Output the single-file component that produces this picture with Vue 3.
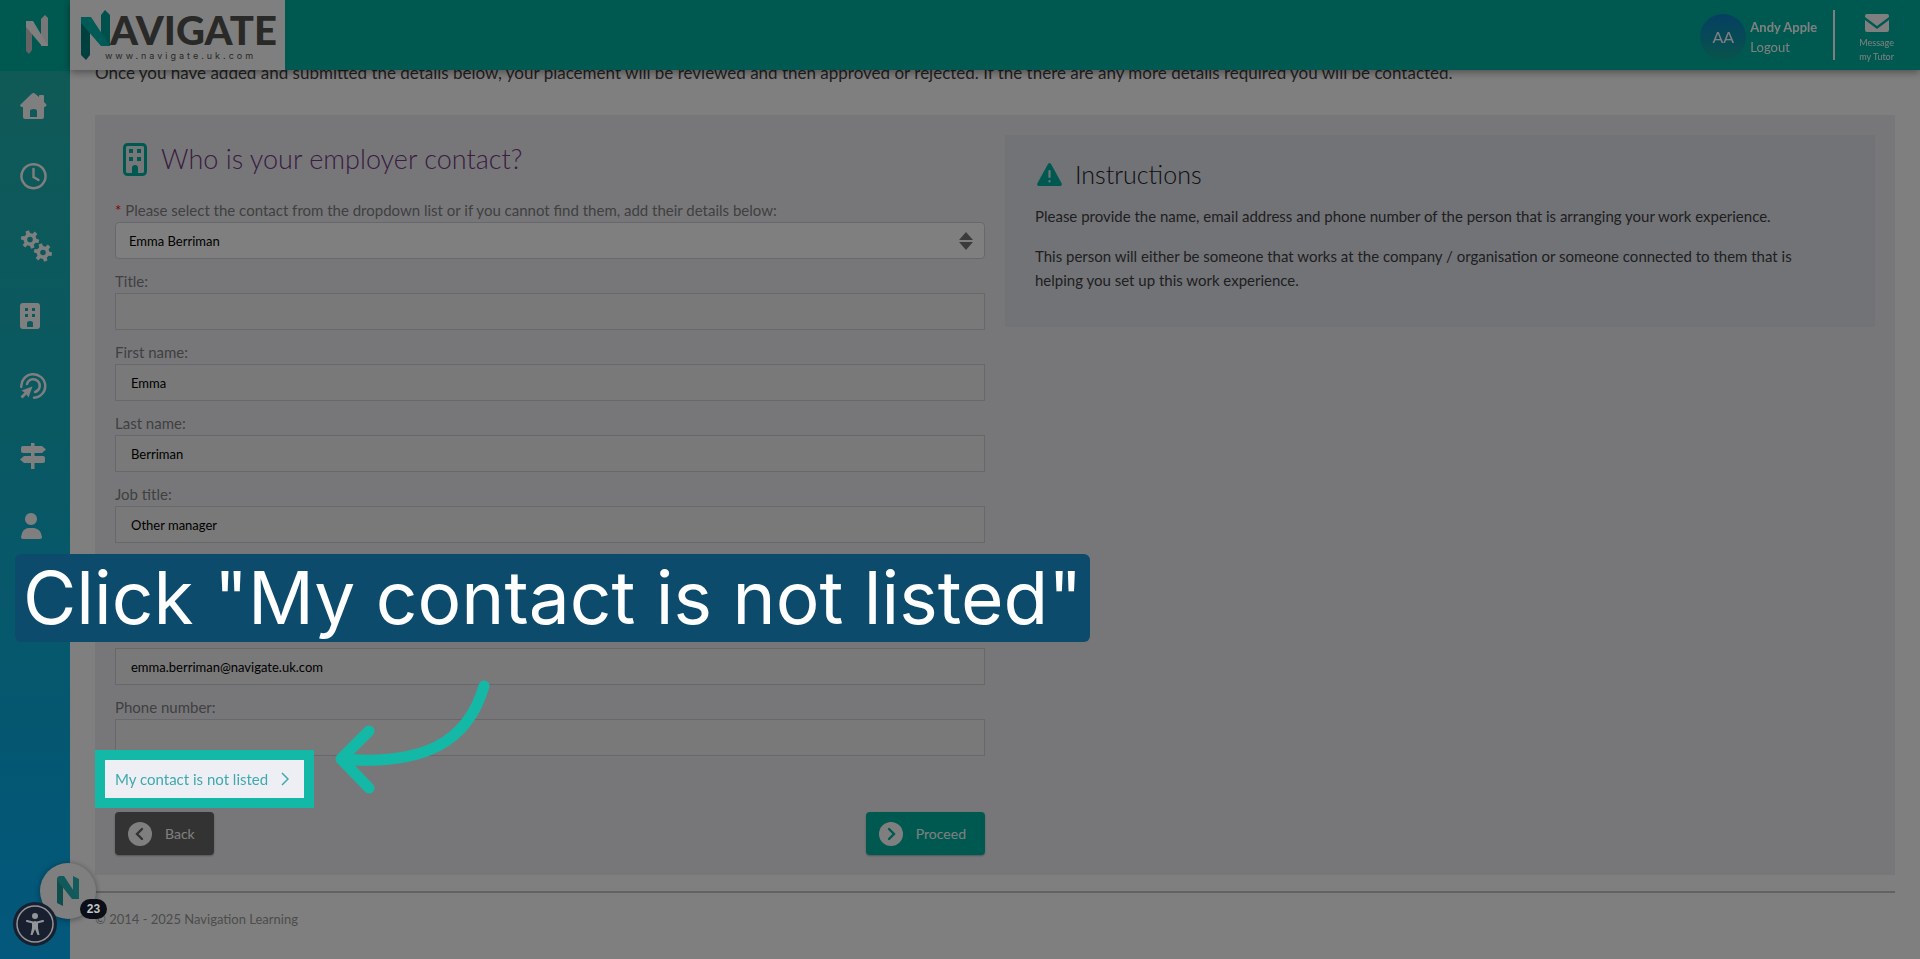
<template>
    <div class="layout">
        <header class="topbar">
            <a href="#" class="brand" aria-label="Navigate">
                <svg width="215" height="70" viewBox="70 0 215 70">
                    <path d="M81 17h9v38l-4 5-5-5z" fill="#00817f" />
                    <path d="M101 15l4-5 5 5v31h-9z" fill="#00a39c" />
                    <path d="M81 17h10l19 29h-9L81 23z" fill="#00b5ac" />
                    <text x="110" y="45" class="brand-name">AVIGATE</text>
                    <text x="105" y="59" class="brand-url">www.navigate.uk.com</text>
                </svg>
            </a>
            <div class="user">
                <span class="avatar">AA</span>
                <div class="user-text">
                    <strong>Andy Apple</strong>
                    <a href="#">Logout</a>
                </div>
                <a href="#" class="message">
                    <svg width="24" height="18" viewBox="0 0 24 18">
                        <path d="M2 0h20a2 2 0 0 1 2 2v1L12 12 0 3V2a2 2 0 0 1 2-2z" fill="#fff" />
                        <path d="M0 6l12 9 12-9v10a2 2 0 0 1-2 2H2a2 2 0 0 1-2-2z" fill="#fff" />
                    </svg>
                    <span>Message<br>my Tutor</span>
                </a>
            </div>
        </header>

        <nav class="sidebar" aria-label="Main">
            <a href="#" class="sidebar-logo" aria-label="Navigate home">
                <svg width="24" height="40" viewBox="0 0 24 40">
                    <path d="M1 6h6v29l-3 4-3-3z" fill="#c8c8c8" />
                    <path d="M16 4l4-4 3 3v28h-7z" fill="#eee" />
                    <path d="M1 6h7l15 25h-6L1 12z" fill="#fff" />
                </svg>
            </a>
            <a v-for="item in menu" :key="item.label" href="#" class="sidebar-item" :aria-label="item.label">
                <svg :width="item.width" :height="item.height" :viewBox="'0 0 ' + item.width + ' ' + item.height">
                    <path
                        v-for="(shape, index) in item.shapes"
                        :key="index"
                        :d="shape"
                        :class="item.outline && index < item.outline ? 'line' : 'solid'"
                    />
                </svg>
            </a>
        </nav>

        <main class="content">
            <p class="intro">Once you have added and submitted the details below, your placement will be reviewed and then approved or rejected. If the there are any more details required you will be contacted.</p>

            <section class="panel">
                <form @submit.prevent>
                    <h2 class="form-title">
                        <svg width="24" height="33" viewBox="0 0 24 33">
                            <rect x="1.5" y="1.5" width="21" height="30" rx="3" fill="none" stroke="#00b3a1" stroke-width="3" />
                            <path d="M6 6h4v4H6zM14 6h4v4h-4zM6 14h4v4H6zM14 14h4v4h-4zM9 31v-6a3 3 0 0 1 6 0v6z" fill="#00b3a1" />
                        </svg>
                        Who is your employer contact?
                    </h2>

                    <div class="field">
                        <label for="contact"><span class="required">*</span> Please select the contact from the dropdown list or if you cannot find them, add their details below:</label>
                        <div class="select-wrap">
                            <select id="contact" v-model="contact">
                                <option>Emma Berriman</option>
                            </select>
                            <svg width="14" height="18" viewBox="0 0 14 18">
                                <path d="M7 0l7 8H0zM0 10h14l-7 8z" fill="#777" />
                            </svg>
                        </div>
                    </div>

                    <div v-for="field in fields" :key="field.id" class="field">
                        <label :for="field.id">{{ field.label }}</label>
                        <input :id="field.id" v-model="field.value" type="text">
                    </div>

                    <a href="#" class="not-listed">
                        My contact is not listed
                        <svg width="8" height="14" viewBox="0 0 8 14">
                            <path d="M1 1l6 6-6 6" fill="none" stroke="#3fa9ad" stroke-width="1.5" />
                        </svg>
                    </a>

                    <div class="actions">
                        <button type="button" class="btn btn-back">
                            <svg width="24" height="24" viewBox="0 0 24 24">
                                <circle cx="12" cy="12" r="12" fill="#fff" />
                                <path d="M14 7l-5 5 5 5" fill="none" stroke="#666" stroke-width="2.4" stroke-linecap="round" />
                            </svg>
                            Back
                        </button>
                        <button type="submit" class="btn btn-next">
                            <svg width="24" height="24" viewBox="0 0 24 24">
                                <circle cx="12" cy="12" r="12" fill="#fff" />
                                <path d="M10 7l5 5-5 5" fill="none" stroke="#00b3a1" stroke-width="2.4" stroke-linecap="round" />
                            </svg>
                            Proceed
                        </button>
                    </div>
                </form>

                <aside class="instructions">
                    <h3>
                        <svg width="25" height="23" viewBox="0 0 25 23">
                            <path d="M11 1q1.500-2 3 0l10.500 19q1 3-1.500 3H2q-2.500 0-1.500-3z" fill="#00b3a1" />
                            <path d="M12.500 8v6M12.500 18v.5" stroke="#e4e6ef" stroke-width="2.200" stroke-linecap="round" />
                        </svg>
                        Instructions
                    </h3>
                    <p>Please provide the name, email address and phone number of the person that is arranging your work experience.</p>
                    <p>This person will either be someone that works at the company / organisation or someone connected to them that is helping you set up this work experience.</p>
                </aside>
            </section>

            <footer class="footer">© 2014 - 2025 Navigation Learning</footer>
        </main>

        <button type="button" class="chat" aria-label="Chat">
            <svg width="24" height="30" viewBox="0 0 24 30">
                <path d="M1 2h6v28l-6-3z" fill="#1a9a9c" />
                <path d="M17 0l6 3v20h-6z" fill="#29b9b9" />
                <path d="M1 2l2-2h5l15 23h-7L1 4z" fill="#22b2b4" />
            </svg>
        </button>
        <span class="badge">23</span>
        <button type="button" class="access" aria-label="Accessibility">
            <svg width="44" height="44" viewBox="0 0 44 44">
                <circle cx="22" cy="22" r="22" fill="#182030" />
                <circle cx="22" cy="22" r="18" fill="none" stroke="#929599" stroke-width="1.500" />
                <circle cx="22" cy="14" r="3" fill="#929599" />
                <path d="M14 19l6 1.500h4l6-1.500M22 20v6" fill="none" stroke="#929599" stroke-width="2.200" stroke-linecap="round" />
                <path d="M19 20h6v6l1.500 7h-2L22 27l-2.500 6h-2l1.500-7z" fill="#929599" />
            </svg>
        </button>

        <!-- walkthrough step -->
        <div class="tour-caption">Click "My contact is not listed"</div>
        <svg class="tour-arrow" width="160" height="120" viewBox="332 678 160 120">
            <path d="M484 686C468 742 424 766 341 759M369 731l-28 28 28 29" fill="none" stroke="#14b8a6" stroke-width="11" stroke-linecap="round" stroke-linejoin="round" />
        </svg>
    </div>
</template>

<script setup>
import { ref } from 'vue';

const contact = ref('Emma Berriman');

const fields = ref([
    { id: 'title', label: 'Title:', value: '' },
    { id: 'first-name', label: 'First name:', value: 'Emma' },
    { id: 'last-name', label: 'Last name:', value: 'Berriman' },
    { id: 'job-title', label: 'Job title:', value: 'Other manager' },
    { id: 'department', label: 'Department:', value: '' },
    { id: 'email', label: 'Email address:', value: 'emma.berriman@navigate.uk.com' },
    { id: 'phone', label: 'Phone number:', value: '' }
]);

// six-tooth cog with a round hole, centred on cx, cy
function gear(cx, cy) {
    const points = [];
    for (let i = 0; i < 6; i++) {
        [[-18, 6.4], [-11, 9.2], [11, 9.2], [18, 6.4]].forEach(([offset, r]) => {
            const a = ((i * 60 + offset + 12) * Math.PI) / 180;
            points.push((cx + r * Math.cos(a)).toFixed(2) + ' ' + (cy + r * Math.sin(a)).toFixed(2));
        });
    }
    return 'M' + points.join('L') + 'z' + `M${cx - 2.8} ${cy}a2.8 2.8 0 1 0 5.6 0a2.8 2.8 0 1 0 -5.6 0z`;
}

const menu = [
    {
        label: 'Home',
        width: 27,
        height: 26,
        shapes: ['M12 .6q1.400-1.200 2.800 0L19 4V3q0-1 1-1h3q1 0 1 1v6l2 2q1 1 0 2l-1 1h-1v10q0 2-2 2H5q-2 0-2-2V14H1.500q-2-1-1-2.500zM10 24h7v-6q0-2-3.500-2T10 18z']
    },
    {
        label: 'Hours',
        width: 27,
        height: 27,
        outline: 2,
        shapes: ['M13.500 1.200a12 12 0 1 0 .01 0z', 'M13.500 6v8l5 3']
    },
    { label: 'Settings', width: 32, height: 32, shapes: [gear(10, 9.5), gear(23, 22.5)] },
    {
        label: 'Employers',
        width: 20,
        height: 26,
        shapes: ['M3 0h14q3 0 3 3v20q0 3-3 3H3q-3 0-3-3V3q0-3 3-3zM5 5v3h3V5zM12 5v3h3V5zM5 11v3h3v-3zM12 11v3h3v-3zM7 24h6v-4q0-2-3-2t-3 2z']
    },
    {
        label: 'Placements',
        width: 27,
        height: 26,
        outline: 2,
        shapes: ['M1.300 14A12 11.800 0 1 1 14 24.800', 'M7 11a6.500 6.500 0 1 1 8 8', 'M12.500 13.500l-4 11-2-3-4 4-2-2 4-4-3-2z']
    },
    {
        label: 'Pathways',
        width: 26,
        height: 26,
        shapes: ['M11 0h3.500v26H11z', 'M3 3h19l4 3.500-4 3.500H3q-2 0-2-2V5q0-2 2-2z', 'M4 13h19q2 0 2 2v3q0 2-2 2H4l-4-3.500z']
    },
    {
        label: 'Profile',
        width: 23,
        height: 26,
        shapes: ['M11 0a6 6 0 1 0 .01 0z', 'M8 15h6q7 1 8 9 0 2-2 2H3q-2 0-2-2 1-8 7-9z']
    }
];
</script>

<style>
body {
    margin: 0;
    background: #fff;
}
</style>

<style scoped>
.layout {
    min-height: 100vh;
    overflow: hidden;
    font-family: Lato, "Open Sans", sans-serif;
    font-size: 15px;
    line-height: 24px;
    color: #3f3f3f;
}

.layout * {
    box-sizing: border-box;
}

a {
    color: inherit;
    text-decoration: none;
}

.topbar {
    position: fixed;
    top: 0;
    left: 70px;
    right: 0;
    z-index: 10;
    height: 70px;
    display: flex;
    justify-content: space-between;
    background: #00b3a1;
    box-shadow: 0 2px 8px rgba(0, 0, 0, 0.4);
}

.brand {
    background: #fff;
}

.brand svg {
    display: block;
}

.brand-name {
    font-size: 40px;
    font-weight: 900;
    fill: #53534f;
}

.brand-url {
    font-family: Inter, sans-serif;
    font-size: 9px;
    letter-spacing: 3px;
    fill: #53534f;
}

.user {
    display: flex;
    align-items: center;
    padding-right: 26px;
    color: #fff;
}

.avatar {
    width: 46px;
    height: 46px;
    margin-top: 4px;
    border-radius: 50%;
    background: linear-gradient(#0b7fc4, #11a898);
    font-size: 16px;
    line-height: 46px;
    text-align: center;
}

.user-text {
    display: flex;
    flex-direction: column;
    margin: 4px 16px 0 4px;
    font-size: 13px;
    line-height: 20px;
}

.message {
    height: 50px;
    padding: 4px 0 0 24px;
    border-left: 2px solid #fff;
    font-size: 9px;
    line-height: 14px;
    text-align: center;
}

.message svg {
    display: block;
    margin: 0 auto 4px;
}

.message span {
    display: block;
}

.sidebar {
    position: fixed;
    top: 0;
    bottom: 0;
    left: 0;
    width: 70px;
    z-index: 5;
    background: linear-gradient(#22b3a8, #12b2c6 45%, #0aafe0 75%, #06b0fa);
}

.sidebar-logo {
    display: block;
    height: 71px;
    padding: 15px 0 0 25px;
    background: #00b3a1;
}

.sidebar-item {
    display: flex;
    align-items: center;
    height: 70px;
    padding-left: 20px;
}

.solid {
    fill: #fff;
    fill-rule: evenodd;
}

.line {
    fill: none;
    stroke: #fff;
    stroke-width: 2.4px;
    stroke-linecap: round;
}

.content {
    margin-left: 70px;
    padding: 61px 25px 0;
}

.intro {
    margin: 0 0 30px;
    font-size: 17px;
}

.panel {
    display: grid;
    grid-template-columns: 1fr 1fr;
    align-items: start;
    gap: 20px;
    padding: 20px;
    background: #eeeff4;
}

.form-title {
    display: flex;
    align-items: center;
    gap: 14px;
    margin: 0 0 15px;
    padding-left: 8px;
    font-size: 27px;
    font-weight: 300;
    line-height: 48px;
    color: #743a82;
}

.field {
    margin-bottom: 10px;
}

.field label {
    display: block;
    color: #808080;
}

.required {
    color: #f00;
}

.field input,
.field select {
    display: block;
    width: 100%;
    height: 37px;
    padding: 0 15px;
    border: 1px solid #ced0d6;
    background: #f2f2f2;
    font: 13px Lato, "Open Sans", sans-serif;
    color: #000;
}

.select-wrap {
    position: relative;
}

.field select {
    appearance: none;
    padding: 0 13px;
    border-radius: 4px;
    background: #fff;
}

.select-wrap svg {
    position: absolute;
    top: 10px;
    right: 12px;
    pointer-events: none;
}

/* highlighted step target, its shadow dims the rest of the page */
.not-listed {
    position: relative;
    z-index: 50;
    display: flex;
    align-items: center;
    gap: 13px;
    width: max-content;
    height: 58px;
    margin: -16px 0 4px -20px;
    padding: 0 15px 0 10px;
    border: 10px solid #14b8a6;
    background: #eeeff4;
    box-shadow: 0 0 0 4000px rgba(0, 0, 0, 0.5);
    color: #3fa9ad;
}

.actions {
    display: flex;
    justify-content: space-between;
}

.btn {
    display: flex;
    align-items: center;
    gap: 13px;
    height: 43px;
    padding: 0 19px 0 13px;
    border: 0;
    border-radius: 4px;
    box-shadow: 0 1px 2px rgba(0, 0, 0, 0.3);
    font: 14px Lato, "Open Sans", sans-serif;
    color: #fff;
}

.btn-back {
    background: #666;
}

.btn-next {
    background: #00b3a1;
}

.instructions {
    padding: 15px 60px 35px 30px;
    background: #e4e6ef;
}

.instructions h3 {
    display: flex;
    align-items: center;
    gap: 13px;
    margin: 0 0 6px;
    padding-left: 2px;
    font-size: 25px;
    font-weight: 300;
    line-height: 48px;
    color: #222;
}

.instructions p {
    margin: 0 0 16px;
}

.instructions p:last-child {
    margin: 0;
}

.footer {
    margin-top: 16px;
    padding: 14px 0 28px;
    border-top: 2px solid #c4c4c4;
    font-size: 13px;
    color: #999;
}

.chat {
    position: fixed;
    left: 40px;
    bottom: 40px;
    z-index: 20;
    display: grid;
    place-items: center;
    width: 56px;
    height: 56px;
    padding: 0;
    border: 0;
    border-radius: 50%;
    background: #fff;
    box-shadow: 0 1px 6px rgba(0, 0, 0, 0.4);
}

.badge {
    position: fixed;
    left: 80px;
    bottom: 40px;
    z-index: 60;
    width: 27px;
    height: 20px;
    border-radius: 10px;
    background: #0a0e18;
    font: bold 12px/20px "Liberation Sans", sans-serif;
    text-align: center;
    color: #c4c4c4;
}

.access {
    position: fixed;
    left: 13px;
    bottom: 13px;
    z-index: 60;
    padding: 0;
    border: 0;
    background: none;
}

.access svg {
    display: block;
}

.tour-caption {
    position: absolute;
    top: 554px;
    left: 15px;
    z-index: 60;
    height: 88px;
    padding: 0 8px;
    border-radius: 6px;
    background: #0d4b6d;
    font-family: Inter, sans-serif;
    font-size: 73px;
    line-height: 88px;
    white-space: nowrap;
    color: #fff;
}

.tour-arrow {
    position: absolute;
    top: 678px;
    left: 332px;
    z-index: 60;
}
</style>
